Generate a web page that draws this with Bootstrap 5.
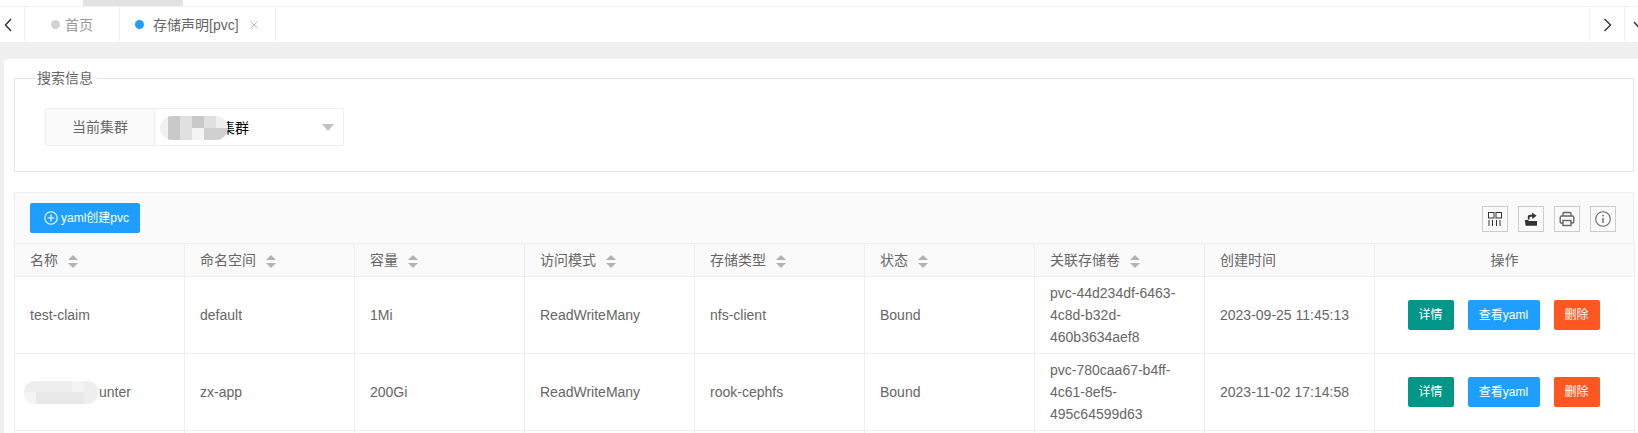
<!DOCTYPE html>
<html lang="zh-CN">
<head>
<meta charset="utf-8">
<title>存储声明</title>
<link href="https://cdn.jsdelivr.net/npm/bootstrap@5.3.0/dist/css/bootstrap.min.css" rel="stylesheet">
<style>
html,body{height:433px;overflow:hidden}
body{background:#f0f0f0;color:#666;font:14px/22px "Liberation Sans","Noto Sans CJK SC",sans-serif}
.top-strip{height:6px;background:#fff}
.top-strip i{display:block;width:100px;height:6px;margin-left:83px;background:#e2e2e2}
.tabbar{height:36px;background:#fff;border-top:1px solid #f2f2f2}
.tab-arrow{width:25px;border-right:1px solid #f2f2f2}
.tab-arrow-r{width:35px;border-left:1px solid #f2f2f2}
.tab-arrow-d{width:14px;border-left:1px solid #f2f2f2;overflow:hidden}
.tab-item{border-right:1px solid #f2f2f2;height:100%}
.tab-home{width:95px;padding-left:26px;color:#999}
.tab-cur{width:156px;padding-left:15px;color:#666}
.tab-dot{width:9px;height:9px;border-radius:50%;background:#d2d2d2;margin-right:5px}
.tab-cur .tab-dot{background:#1e9fff;margin-right:9px}
.tab-x{margin-left:11px}
.panel-main{height:374px;overflow:hidden;margin:17px 0 0 4px;background:#fff;border-radius:4px 0 0 0;padding:12px 4px 0 10px}
.search-box{height:101px;border:1px solid #e6e6e6;padding:0;margin:0;min-width:0}
.search-box legend{float:none;width:auto;margin:0 0 0 20px;padding:0 2px;font-size:14px;line-height:1;color:#666}
.cluster-group{width:299px;height:38px;margin:23px 0 0 30px;border:1px solid #eee;border-radius:2px;flex-wrap:nowrap}
.cluster-label{width:109px;background:#fafafa;border-right:1px solid #eee;color:#666}
.cluster-value{color:#000;padding:2px 0 0 5px;position:relative}
.cluster-caret{margin:-2px 9px 0 auto;border-style:solid;border-width:7px 6px 0;border-color:#c2c2c2 transparent transparent}
.blur-a,.blur-b{display:inline-grid;flex:none;overflow:hidden}
.blur-a{width:68px;height:24px;grid-template-columns:8px repeat(5,12px);grid-auto-rows:12px;border-radius:12px;margin-right:-7px;position:relative}
.blur-b{width:74px;height:23px;grid-template-columns:12px repeat(5,12px) 2px;grid-auto-rows:11.5px;border-radius:10px;margin:0 1px 0 -6px}
.s1{background:#f0f0f0}.s2{background:#c9c9c9}.s3{background:#e0e0e0}.s4{background:#d0d0d0}.s5{background:#f4f4f4}.s6{background:#e8e8e8}.s7{background:#eeeeee}
.pvc-wrap{margin-top:20px;width:1620px}
.pvc-bar{height:51px;background:#fafafa;border:1px solid #eee;border-bottom:0;padding:10px 17px 0 15px}
.btn-add{height:30px;width:110px;padding:0 0 0 14px;gap:3px;border:0;border-radius:2px;background:#1e9fff;color:#fff;font-size:12px;line-height:30px}
.btn-add:hover{background:#1e9fff;color:#fff}
.tool-box{width:26px;height:26px;border:1px solid #ccc;margin-top:3px;margin-left:10px;color:#333}
.pvc-table{table-layout:fixed;width:1620px;margin:0;--bs-table-color:#666;--bs-table-border-color:#eee;border-color:#eee;font-size:14px;line-height:22px;color:#666}
.pvc-table th,.pvc-table td{padding:5px 15px;vertical-align:middle;font-weight:400;color:#666;border-width:1px}
.pvc-table th{background:#fafafa;height:33px}
.pvc-table td{height:77px}
.w-std{width:170px}.w-act{width:260px}
.name-flex{display:flex;align-items:center}
.sort-mark{display:inline-block;width:10px;margin-left:10px;vertical-align:middle}
.sort-mark i{display:block;width:0;height:0;border-left:5px solid transparent;border-right:5px solid transparent}
.sort-mark i:first-child{border-bottom:5px solid #b2b2b2;margin-bottom:3px}
.sort-mark i:last-child{border-top:5px solid #b2b2b2}
.act-btn{height:30px;line-height:30px;padding:0;border:0;border-radius:2px;color:#fff;font-size:12px;width:46px}
.act-btn:hover{color:#fff}
.act-green,.act-green:hover{background:#009688}
.act-blue,.act-blue:hover{background:#1e9fff;width:72px}
.act-red,.act-red:hover{background:#ff5722}
.act-gap{gap:14px;margin-left:-2px}
</style>
</head>
<body>
<div class="top-strip"><i></i></div>
<div class="tabbar d-flex align-items-stretch">
  <div class="tab-arrow d-flex align-items-center ps-1">
    <svg width="9" height="14" viewBox="0 0 9 14"><path d="M7 1 L1.5 7 L7 13" fill="none" stroke="#333" stroke-width="1.4"/></svg>
  </div>
  <div class="tab-item tab-home d-flex align-items-center"><span class="tab-dot"></span>首页</div>
  <div class="tab-item tab-cur d-flex align-items-center"><span class="tab-dot"></span>存储声明[pvc]
    <svg class="tab-x" width="8" height="8" viewBox="0 0 8 8"><path d="M.5 .5 L7.5 7.5 M7.5 .5 L.5 7.5" stroke="#bbb" stroke-width="1"/></svg>
  </div>
  <div class="flex-grow-1"></div>
  <div class="tab-arrow-r d-flex align-items-center justify-content-center">
    <svg width="9" height="14" viewBox="0 0 9 14"><path d="M1.5 1 L7.5 7 L1.5 13" fill="none" stroke="#333" stroke-width="1.4"/></svg>
  </div>
  <div class="tab-arrow-d d-flex align-items-center ps-2">
    <svg class="flex-shrink-0" width="12" height="8" viewBox="0 0 12 8"><path d="M1 1 L6 6.5 L11 1" fill="none" stroke="#333" stroke-width="1.4"/></svg>
  </div>
</div>
<main class="panel-main">
  <fieldset class="search-box">
    <legend>搜索信息</legend>
    <div class="cluster-group d-flex">
      <div class="cluster-label d-flex align-items-center justify-content-center">当前集群</div>
      <div class="cluster-value d-flex align-items-center flex-grow-1">
        <span class="blur-a"><b class="s1"></b><b class="s2"></b><b class="s3"></b><b class="s2"></b><b class="s3"></b><b class="s1"></b><b class="s1"></b><b class="s2"></b><b class="s3"></b><b class="s5"></b><b class="s4"></b><b class="s4"></b></span>
        <span>集群</span>
        <span class="cluster-caret"></span>
      </div>
    </div>
  </fieldset>
  <section class="pvc-wrap">
    <div class="pvc-bar d-flex justify-content-between align-items-start">
      <button class="btn btn-add d-flex align-items-center" type="button">
        <svg width="14" height="14" viewBox="0 0 14 14"><circle cx="7" cy="7" r="6.2" fill="none" stroke="#fff" stroke-width="1.1"/><path d="M7 3.6 V10.4 M3.6 7 H10.4" stroke="#fff" stroke-width="1.1"/></svg>
        <span>yaml创建pvc</span>
      </button>
      <div class="d-flex">
        <div class="tool-box d-flex align-items-center justify-content-center">
          <svg width="14" height="14" viewBox="0 0 14 14" fill="none" stroke="#333" stroke-width="1"><rect x=".5" y=".5" width="5.5" height="5.5"/><rect x="8" y=".5" width="5.5" height="5.5"/><path d="M1 8V14M4.5 8V14M8.5 8V14M12 8V14"/></svg>
        </div>
        <div class="tool-box d-flex align-items-center justify-content-center">
          <svg width="14" height="14" viewBox="0 0 14 14"><path d="M.8 8 H4 L5 9 H13 V13.8 H1.6 Z" fill="#333"/><path d="M3.8 7.5 V4.6 Q3.8 2.8 6 2.8 H8.2 V.4 L12.6 3.8 L8.2 7 V4.8 H6.6 Q5.6 4.8 5.6 5.8 V7.5 Z" fill="#333"/></svg>
        </div>
        <div class="tool-box d-flex align-items-center justify-content-center">
          <svg width="16" height="16" viewBox="0 0 16 16" fill="none" stroke="#666" stroke-width="1.4"><path d="M4 5 V2.5 Q4 1.5 5 1.5 H11 Q12 1.5 12 2.5 V5"/><path d="M4 12 H2.5 Q1.2 12 1.2 10.7 V6.5 Q1.2 5 2.7 5 H13.3 Q14.8 5 14.8 6.5 V10.7 Q14.8 12 13.5 12 H12"/><rect x="4" y="9.5" width="8" height="5"/></svg>
        </div>
        <div class="tool-box d-flex align-items-center justify-content-center">
          <svg width="16" height="16" viewBox="0 0 16 16" fill="none" stroke="#666" stroke-width="1.1"><circle cx="8" cy="8" r="7.3"/><path d="M8 7 V12" stroke-width="1.4"/><circle cx="8" cy="4.6" r=".9" fill="#666" stroke="none"/></svg>
        </div>
      </div>
    </div>
    <table class="table table-bordered pvc-table">
      <thead>
        <tr>
          <th class="w-std">名称<span class="sort-mark"><i></i><i></i></span></th>
          <th class="w-std">命名空间<span class="sort-mark"><i></i><i></i></span></th>
          <th class="w-std">容量<span class="sort-mark"><i></i><i></i></span></th>
          <th class="w-std">访问模式<span class="sort-mark"><i></i><i></i></span></th>
          <th class="w-std">存储类型<span class="sort-mark"><i></i><i></i></span></th>
          <th class="w-std">状态<span class="sort-mark"><i></i><i></i></span></th>
          <th class="w-std">关联存储卷<span class="sort-mark"><i></i><i></i></span></th>
          <th class="w-std">创建时间</th>
          <th class="w-act text-center">操作</th>
        </tr>
      </thead>
      <tbody>
        <tr>
          <td>test-claim</td><td>default</td><td>1Mi</td><td>ReadWriteMany</td><td>nfs-client</td><td>Bound</td>
          <td>pvc-44d234df-6463-4c8d-b32d-460b3634aef8</td><td>2023-09-25 11:45:13</td>
          <td><div class="d-flex justify-content-center act-gap"><button class="btn act-btn act-green" type="button">详情</button><button class="btn act-btn act-blue" type="button">查看yaml</button><button class="btn act-btn act-red" type="button">删除</button></div></td>
        </tr>
        <tr>
          <td><div class="name-flex"><span class="blur-b"><b class="s7"></b><b class="s7"></b><b class="s7"></b><b class="s7"></b><b class="s5"></b><b class="s7"></b><b class="s7"></b><b class="s5"></b><b class="s6"></b><b class="s6"></b><b class="s6"></b><b class="s6"></b><b class="s7"></b><b class="s7"></b></span><span>unter</span></div></td>
          <td>zx-app</td><td>200Gi</td><td>ReadWriteMany</td><td>rook-cephfs</td><td>Bound</td>
          <td>pvc-780caa67-b4ff-4c61-8ef5-495c64599d63</td><td>2023-11-02 17:14:58</td>
          <td><div class="d-flex justify-content-center act-gap"><button class="btn act-btn act-green" type="button">详情</button><button class="btn act-btn act-blue" type="button">查看yaml</button><button class="btn act-btn act-red" type="button">删除</button></div></td>
        </tr>
        <tr><td></td><td></td><td></td><td></td><td></td><td></td><td></td><td></td><td></td></tr>
      </tbody>
    </table>
  </section>
</main>
</body>
</html>
